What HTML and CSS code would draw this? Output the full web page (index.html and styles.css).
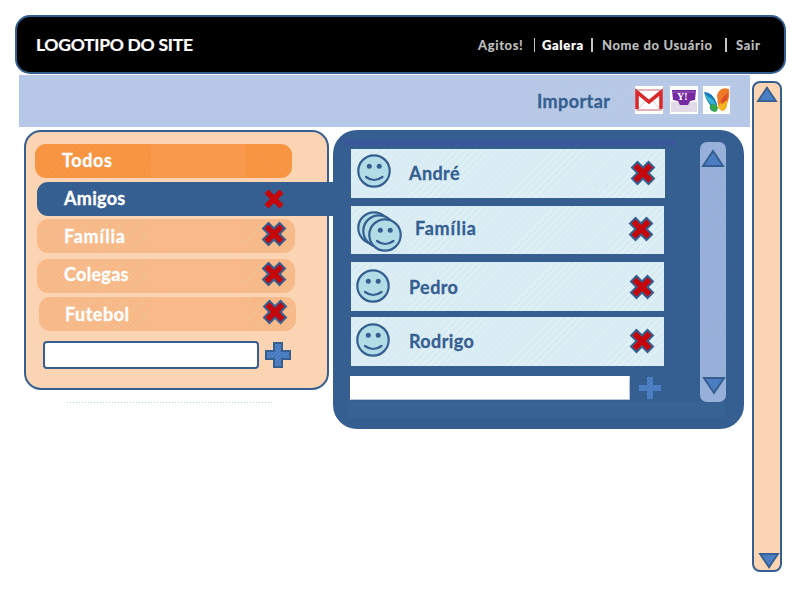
FILE: index.html
```html
<!DOCTYPE html>
<html lang="pt-BR">
<head>
<meta charset="utf-8">
<title>Galera</title>
<link rel="stylesheet" href="styles.css">
</head>
<body>
<svg class="defs" width="0" height="0">
  <defs>
    <pattern id="blue" width="4" height="4" patternUnits="userSpaceOnUse"><rect width="4" height="4" fill="#477bbd"/><path d="M0 4L4 0" stroke="#598bd3" stroke-width=".8"/></pattern>
    <symbol id="x" viewBox="0 0 26 26"><path d="M7.500 2L13 7.500 18.500 2 24 7.500 18.500 13 24 18.500 18.500 24 13 18.500 7.500 24 2 18.500 7.500 13 2 7.500z" fill="#c4070b" stroke="#365f91" stroke-width="2"/></symbol>
    <symbol id="face" viewBox="0 0 36 36"><circle cx="18" cy="18" r="15.700" fill="#b2dde6" stroke="#365f91" stroke-width="2.200"/><circle cx="13.300" cy="13.300" r="2.500" fill="#365f91"/><circle cx="23.200" cy="13.300" r="2.500" fill="#365f91"/><path d="M10 24q8 6 16.500 0" fill="none" stroke="#365f91" stroke-width="2.200" stroke-linecap="round"/></symbol>
    <symbol id="plus" viewBox="0 0 28 28"><path d="M10 2h8v8h8v8h-8v8h-8v-8H2v-8h8z" fill="url(#blue)" stroke="#365f91" stroke-width="2"/></symbol>
    <symbol id="up" viewBox="0 0 24 20"><path d="M12 3L22 18H2z" fill="url(#blue)" stroke="#365f91" stroke-width="2"/></symbol>
  </defs>
</svg>
<header class="topbar">
  <div class="logo">LOGOTIPO DO SITE</div>
  <nav class="nav"><span class="agitos">Agitos!</span><i></i><b>Galera</b><i class="thick"></i><span class="nome">Nome do Usuário</span><i class="thick"></i><span class="sair">Sair</span></nav>
</header>
<div class="body">
  <main class="main">
    <div class="import">
      <div class="import-box">
        <span class="import-label">Importar</span>
        <svg class="g1" width="28" height="28" viewBox="0 0 28 28"><path fill="#fff" d="M0 0h28v28H0z"/><path d="M3 5l11 11L25 5M4 22l7-8M24 22l-7-8" fill="none" stroke="#d9c5c4"/><path d="M2 23V6l12 10L26 6v17" fill="none" stroke="#d8282c" stroke-width="3.600"/><path d="M1 4h26M1 24h26" stroke="#c5656a" stroke-width="1"/></svg>
        <svg class="g2" width="28" height="28" viewBox="0 0 28 28"><path fill="#fff" d="M0 0h28v28H0z"/><path fill="#e3dae8" d="M1 16h26v10H1z"/><path d="M2 4h24l-1 10-5 1-2 4H10l-2-4-5-1z" fill="#7629a0"/><path d="M3 6h22" stroke="#9b62bc"/><text x="7" y="14" class="yahoo">Y!</text></svg>
        <svg class="g3" width="27" height="28" viewBox="0 0 27 28"><path fill="#fff" d="M0 0h27v28H0z"/><path d="M1 6q9 0 13 12v4q-2 4-5 3-3-2-2-6Q3 14 1 6z" fill="#1979bd"/><path d="M2 8q2 7 6 10l5 1q-2-6-7-8z" fill="#36b3cf"/><path d="M7 19q5-2 8 2 0 5-4 5-4-2-4-7z" fill="#38a84a"/><path d="M26 3q-9-3-12 6l1 10 3 5q5 1 6-6 3-7 2-15z" fill="#ed7a26"/><path d="M15 19q6-2 9-7 1 12-4 13-5-1-5-6z" fill="#f5b324"/><path d="M18 14l7-8-1 8-5 4z" fill="#df4d25"/></svg>
      </div>
    </div>
    <div class="panels">
      <div class="left">
        <section class="groups">
          <div class="group todos"><span>Todos</span></div>
          <div class="group amigos"><span>Amigos</span><svg class="x"><use href="#x"/></svg></div>
          <div class="group familia"><span>Família</span><svg class="x"><use href="#x"/></svg></div>
          <div class="group colegas"><span>Colegas</span><svg class="x"><use href="#x"/></svg></div>
          <div class="group futebol"><span>Futebol</span><svg class="x"><use href="#x"/></svg></div>
          <div class="add"><input class="field" aria-label="Grupo"><svg class="plus" width="28" height="28"><use href="#plus"/></svg></div>
        </section>
        <div class="dots"></div>
      </div>
      <section class="people">
        <div class="strip"></div>
        <div class="people-main">
          <div class="list">
            <div class="person andre"><svg class="face"><use href="#face"/></svg><span>André</span><em></em><svg class="x"><use href="#x"/></svg></div>
            <div class="person fam"><svg class="faces" width="48" height="44" viewBox="0 0 48 44"><use href="#face" width="36" height="36"/><use href="#face" x="5" y="3" width="36" height="36"/><use href="#face" x="11" y="7" width="36" height="36"/></svg><span>Família</span><svg class="x"><use href="#x"/></svg></div>
            <div class="person pedro"><svg class="face"><use href="#face"/></svg><span>Pedro</span><svg class="x"><use href="#x"/></svg></div>
            <div class="person rodrigo"><svg class="face"><use href="#face"/></svg><span>Rodrigo</span><svg class="x"><use href="#x"/></svg></div>
            <div class="add2"><input class="field2" aria-label="Pessoa"><svg class="plus2" width="28" height="28"><use href="#plus"/></svg></div>
          </div>
          <div class="scroll"><svg width="24" height="20"><use href="#up"/></svg><svg class="down" width="24" height="20"><use href="#up"/></svg></div>
        </div>
        <div class="foot"></div>
      </section>
    </div>
  </main>
  <div class="page-scroll"><svg width="26" height="18"><use href="#up"/></svg><svg class="down last" width="26" height="18"><use href="#up"/></svg></div>
</div>
</body>
</html>
```
FILE: styles.css
```css
* { box-sizing: border-box; }
body { margin: 0; width: 800px; height: 600px; overflow: hidden; background: #fff; font-family: Lato, "Open Sans", sans-serif; font-weight: 700; padding: 15px 14px 0 15px; }
.defs { position: absolute; }
svg { display: block; flex: none; }
.topbar { height: 59px; background: #000; border: 2px solid #365f91; border-radius: 15px; display: flex; align-items: center; padding: 0 23px 0 19px; color: #fff; justify-content: space-between; }
.logo { font-size: 17.5px; white-space: nowrap; letter-spacing: -.28px; -webkit-text-stroke: .2px; }
.nav { display: flex; align-items: center; font-size: 13px; color: #bfbfbf; letter-spacing: .65px; white-space: nowrap; width: 283px; height: 24px; -webkit-text-stroke: .2px; }
.nav b { color: #fff; width: 41px; }
.nav i { width: 1px; height: 14px; background: #c4c4c4; }
.nav i.thick { width: 2px; }
.agitos { width: 56px; }
.nav i + b { margin-left: 7px; }
.nav b + i { margin-left: 8px; }
.nome { margin-left: 9px; width: 123px; }
.sair { margin-left: 9px; }
.body { display: flex; padding-left: 4px; margin-top: 1px; }
.main { width: 731px; }
.import { height: 52px; background: #b7c7e8; display: flex; justify-content: flex-end; padding: 7px 9px 0 0; }
.import-box { width: 208px; height: 37px; display: flex; padding: 4px 0 0 4px; background: repeating-linear-gradient(135deg, #b7c7e8 0 2px, #b7cce3 2px 3px); }
.import-label { width: 98px; font-size: 18px; line-height: 22px; padding-top: 4px; color: #365f91; letter-spacing: .4px; -webkit-text-stroke: .3px; }
.g2 { margin-left: 7px; }
.g3 { margin-left: 5px; }
.yahoo { font: 700 10px "Liberation Serif", serif; fill: #fff; }
.panels { display: flex; padding: 3px 0 0 5px; }
.left { width: 309px; }
.groups { width: 305px; height: 260px; border: 2px solid #365f91; border-radius: 17px; background: #fbd4b4; padding: 12px 0 0 11px; }
.group { display: flex; width: 258px; height: 34px; border-radius: 11px; color: #fff; font-size: 18px; line-height: 22px; letter-spacing: .3px; -webkit-text-stroke: .3px; background: linear-gradient(90deg, transparent 110px, #f9b98a 110px 206px, transparent 206px), repeating-linear-gradient(135deg, #fbb687 0 2px, #efc28f 2px 3px); }
.group span { width: 199px; padding: 6px 0 0 27px; }
.group .x { margin: 2px 0 0 25px; }
.x { width: 26px; height: 26px; }
.group.todos { margin-left: -2px; letter-spacing: .6px; background: linear-gradient(90deg, transparent 116px, #f9994b 116px 210px, transparent 210px), repeating-linear-gradient(135deg, #fa9546 0 3px, #ed963a 3px 4px); width: 257px; }
.todos span { padding-top: 5px; }
.group.amigos { width: 300px; margin-top: 4px; background: #365f91; border-radius: 11px 0 0 11px; position: relative; }
.amigos span { padding-top: 5px; }
.group.amigos .x { margin-top: 4px; }
.group.familia { margin-top: 3px; letter-spacing: .75px; }
.group.colegas { margin-top: 6px; }
.group.futebol { margin-top: 4px; margin-left: 2px; width: 257px; letter-spacing: .5px; }
.colegas span { padding-top: 4px; }
.futebol span { padding: 6px 0 0 26px; width: 198px; }
.add { display: flex; margin: 10px 0 0 6px; }
.field { width: 216px; height: 28px; border: 2px solid #365f91; border-radius: 4px; background: #fff; padding: 0; margin: 0; }
.plus { margin-left: 5px; }
.dots { height: 1px; width: 206px; margin: 12px 0 0 43px; background: repeating-linear-gradient(90deg, #a8d5e6 0 1px, transparent 1px 3px); }
.people { width: 411px; height: 299px; border-radius: 24px; background: #365f91; padding-top: 9px; }
.strip { width: 332px; height: 7px; margin-left: 10px; background: #3a5899; }
.people-main { display: flex; height: 256px; padding-left: 18px; }
.list { width: 349px; padding-top: 3px; }
.person { width: 313px; height: 49px; margin-bottom: 6px; display: flex; font-size: 18px; line-height: 22px; letter-spacing: .4px; -webkit-text-stroke: .3px; color: #365f91; background: repeating-linear-gradient(135deg, #d9ecf4 0 4px, #e1f2f5 4px 5px); }
.face { width: 36px; height: 36px; margin: 6px 0 0 4px; }
.faces { margin: 4px 0 0 5px; }
.person span { padding: 14px 0 0 18px; width: 219px; }
.person .x { margin: 12px 0 0 19px; }
.person.andre { width: 314px; margin-bottom: 8px; }
.andre .face { margin: 4px 0 0 5px; }
.andre span { width: 189px; padding: 13px 0 0 17px; }
.andre em { width: 12px; height: 1px; margin: 36px 0 0 14px; border: solid #b3cfdf; border-width: 0 1px; }
.person.andre .x { margin: 11px 0 0 23px; }
.person.fam { height: 48px; margin-bottom: 8px; letter-spacing: .75px; }
.fam span { padding: 11px 0 0 11px; width: 206px; }
.person.fam .x { margin: 10px 0 0 18px; }
.rodrigo .face { margin-top: 5px; }
.rodrigo span { padding-top: 13px; }
.person.rodrigo .x { margin-top: 11px; }
.add2 { display: flex; margin: 10px 0 0 -1px; }
.field2 { width: 280px; height: 24px; background: #fff; border: 1px solid #b8c3df; border-left-color: #fff; border-top-color: #fff; padding: 0; margin: 0; }
.plus2 { margin: -2px 0 0 6px; height: 28px; }
.scroll { width: 26px; height: 260px; margin-top: -4px; flex: none; border-radius: 7px; background: repeating-linear-gradient(135deg, #95b1d8 0 3px, #a0aedf 3px 4px); display: flex; flex-direction: column; justify-content: space-between; padding: 6px 0 6px 1px; }
.down { transform: rotate(180deg); }
.scroll .down { margin-left: 1px; }
.foot { height: 16px; width: 377px; margin: 0 0 0 15px; background: #366393; }
.page-scroll { width: 30px; height: 491px; margin: 6px 0 0 2px; border: 2px solid #365f91; border-radius: 8px; background: #fbd4b4; display: flex; flex-direction: column; justify-content: space-between; padding: 2px 0 0; }
.last { margin-left: 2px; }
```
